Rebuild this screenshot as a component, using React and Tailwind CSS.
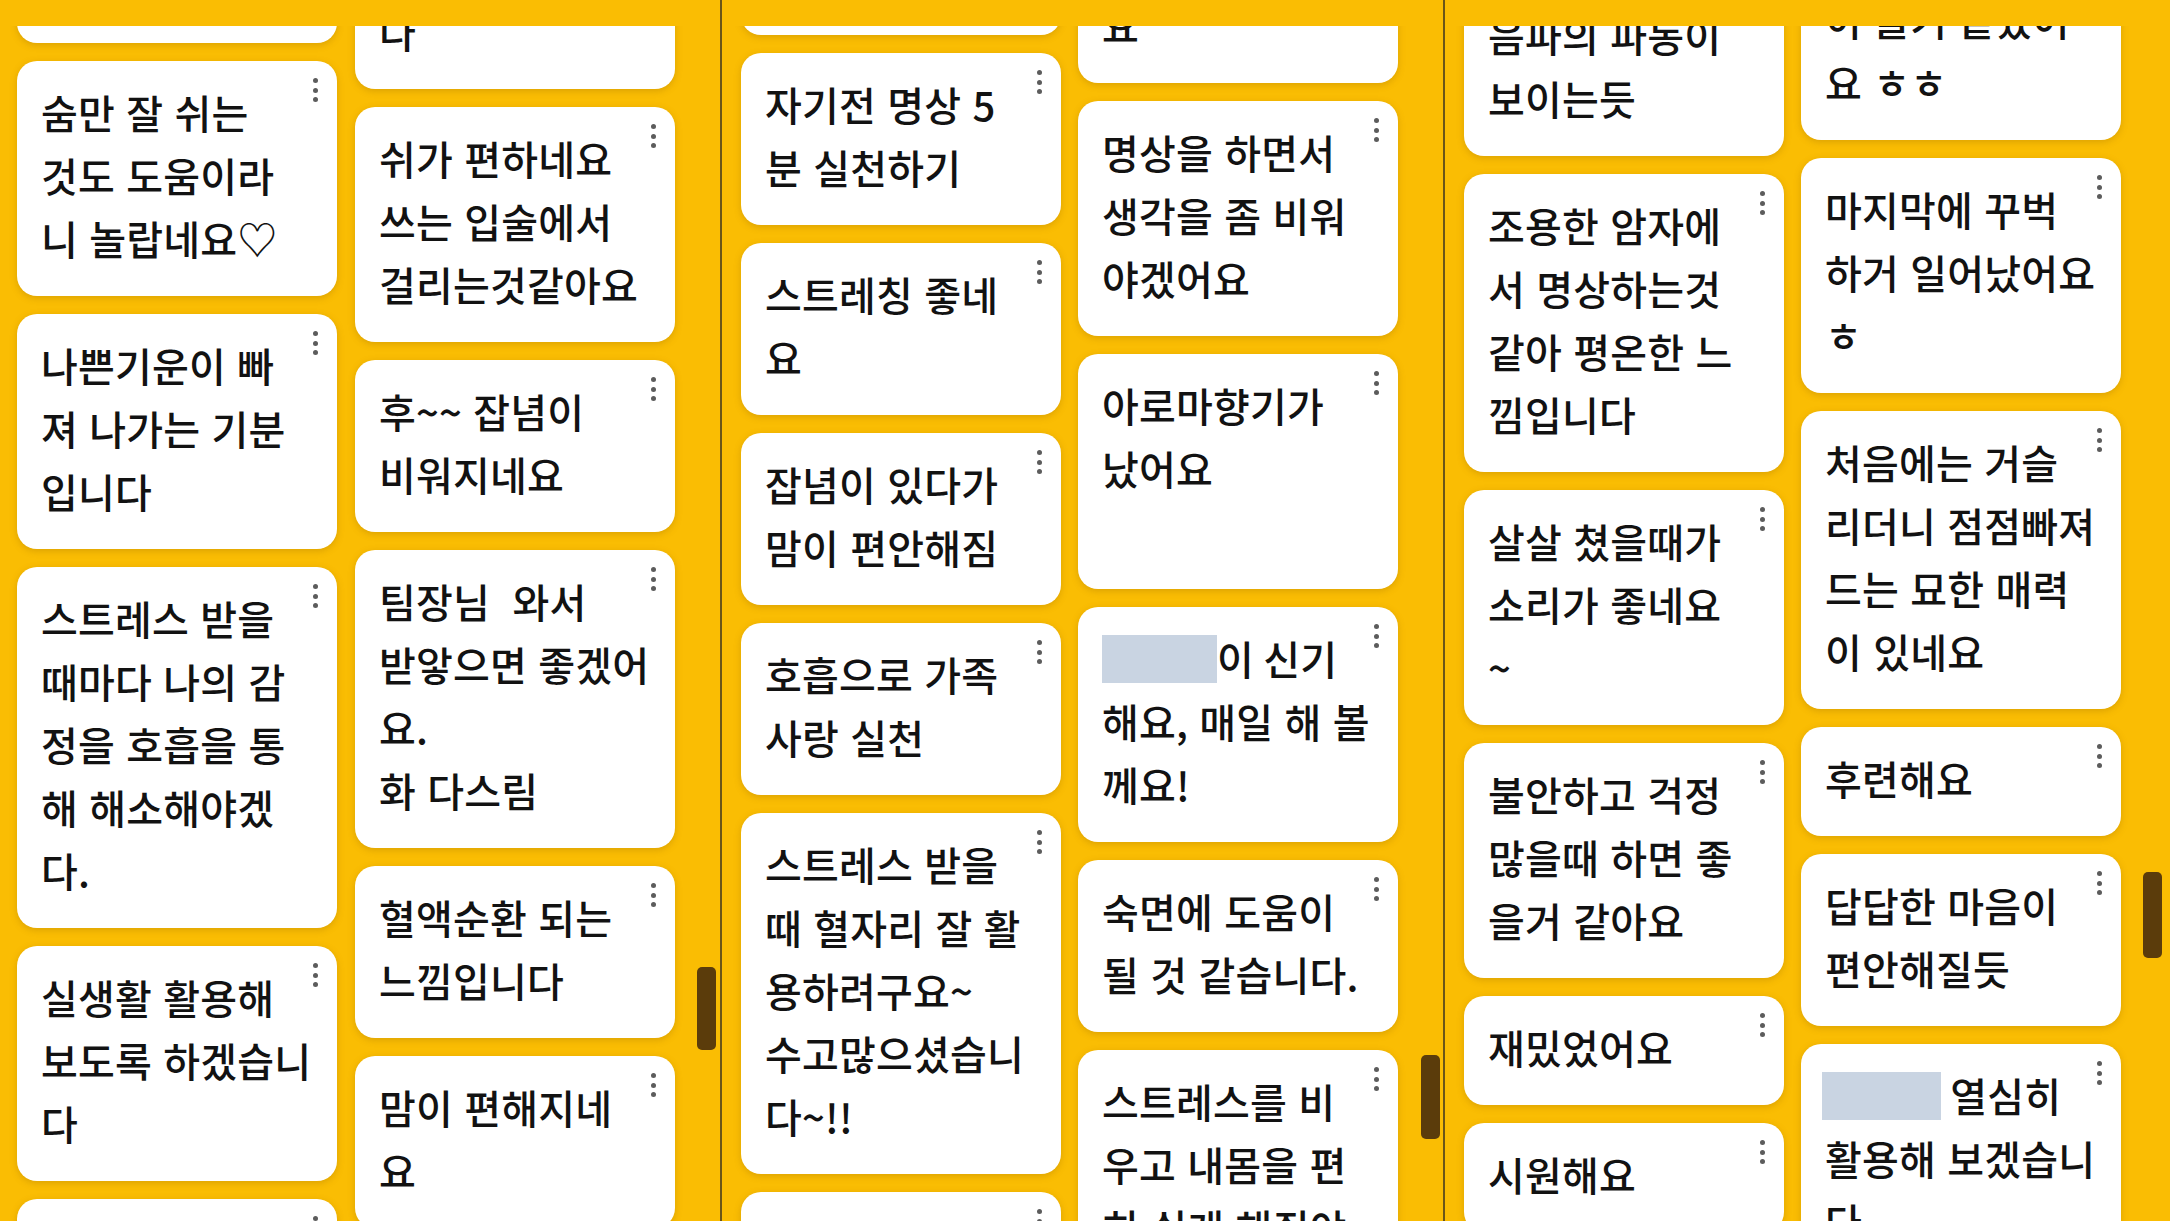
import React from "react";

const Blur = ({ w }) => (
  <span className={`inline-block h-[48px] bg-[#c9d4e2] ${w}`} />
);

const P1L = {
  offset: "-mt-[155px]",
  cards: [
    ["오늘도 감사", "좋은 시간"],
    ["숨만 잘 쉬는", "것도 도움이라", "니 놀랍네요♡"],
    ["나쁜기운이 빠", "져 나가는 기분", "입니다"],
    ["스트레스 받을", "때마다 나의 감", "정을 호흡을 통", "해 해소해야겠", "다."],
    ["실생활 활용해", "보도록 하겠습니", "다"],
    ["마음이 차분해", "집니다"],
  ],
};
const P1R = {
  offset: "-mt-[109px]",
  cards: [
    ["편안한 느낌입니", "다"],
    ["쉬가 편하네요", "쓰는 입술에서", "걸리는것같아요"],
    ["후~~ 잡념이", "비워지네요"],
    ["팀장님  와서", "받앟으면 좋겠어", "요.", "화 다스림"],
    ["혈액순환 되는", "느낌입니다"],
    ["맘이 편해지네", "요"],
  ],
};
const P2L = {
  offset: "-mt-[163px]",
  cards: [
    ["좋은 시간이었", "습니다"],
    ["자기전 명상 5", "분 실천하기"],
    ["스트레칭 좋네", "요"],
    ["잡념이 있다가", "맘이 편안해짐"],
    ["호흡으로 가족", "사랑 실천"],
    ["스트레스 받을", "때 혈자리 잘 활", "용하려구요~", "수고많으셨습니", "다~!!"],
    ["감사합니다", "좋았어요"],
  ],
};
const P2R = {
  offset: "-mt-[115px]",
  cards: [
    ["마음이 편해지네", "요"],
    ["명상을 하면서", "생각을 좀 비워", "야겠어요"],
    ["아로마향기가", "났어요", ""],
    [
      { blur: "w-[115px]", text: "이 신기" },
      "해요, 매일 해 볼",
      "께요!",
    ],
    ["숙면에 도움이", "될 것 같습니다."],
    ["스트레스를 비", "우고 내몸을 편", "히 쉬게 해줘야"],
  ],
};
const P3L = {
  offset: "-mt-[42px]",
  cards: [
    ["음파의 파동이", "보이는듯"],
    ["조용한 암자에", "서 명상하는것", "같아 평온한 느", "낌입니다"],
    ["살살 쳤을때가", "소리가 좋네요", "~"],
    ["불안하고 걱정", "많을때 하면 좋", "을거 같아요"],
    ["재밌었어요"],
    ["시원해요"],
  ],
};
const P3R = {
  offset: "-mt-[121px]",
  cards: [
    ["명상하다가 잠", "이 들기 끝났어", "요 ㅎㅎ"],
    ["마지막에 꾸벅", "하거 일어났어요", "ㅎ"],
    ["처음에는 거슬", "리더니 점점빠져", "드는 묘한 매력", "이 있네요"],
    ["후련해요"],
    ["답답한 마음이", "편안해질듯"],
    [
      { blur: "w-[119px]", text: " 열심히", shift: "-ml-[3px]" },
      "활용해 보겠습니",
      "다",
    ],
  ],
};

function Dots() {
  return (
    <div className="absolute top-[17px] right-[19px] flex flex-col gap-[4.5px]">
      <span className="block w-[5px] h-[5px] rounded-full bg-[#5c5c5c]" />
      <span className="block w-[5px] h-[5px] rounded-full bg-[#5c5c5c]" />
      <span className="block w-[5px] h-[5px] rounded-full bg-[#5c5c5c]" />
    </div>
  );
}

function Card({ lines }) {
  return (
    <div className="relative shrink-0 w-[320px] rounded-[20px] bg-white pl-[24px] pr-[30px] pt-[20px] pb-[26px] shadow-[0_2px_7px_rgba(140,90,0,0.28)]">
      {lines.map((l, i) =>
        typeof l === "string" ? (
          <div
            key={i}
            className="h-[63px] leading-[63px] whitespace-pre text-[40px] font-medium tracking-[0.2px] [word-spacing:2px] text-[#121212]"
          >
            {l}
          </div>
        ) : (
          <div
            key={i}
            className={`h-[63px] flex items-center whitespace-pre text-[40px] font-medium leading-[63px] tracking-[0.2px] text-[#121212] ${l.shift || ""}`}
          >
            <Blur w={l.blur} />
            <span>{l.text}</span>
          </div>
        )
      )}
      <Dots />
    </div>
  );
}

function Column({ data, extra }) {
  return (
    <div className={`flex flex-col gap-[18px] w-[320px] shrink-0 ${data.offset} ${extra || ""}`}>
      {data.cards.map((c, i) => (
        <Card key={i} lines={c} />
      ))}
    </div>
  );
}

function Panel({ width, pad, left, right, gap, barMl, thumbMt, thumbH }) {
  return (
    <div className={`flex flex-col h-full shrink-0 ${width}`}>
      <div className="h-[26px] shrink-0" />
      <div className={`flex-1 overflow-hidden flex flex-row items-start ${pad}`}>
        <Column data={left} />
        <Column data={right} extra={gap} />
        <div className={`w-[19px] shrink-0 flex flex-col ${barMl}`}>
          <div className={`w-[19px] rounded-[5px] bg-[#5b3c0b] ${thumbMt} ${thumbH}`} />
        </div>
      </div>
    </div>
  );
}

export default function App() {
  return (
    <div
      className="w-[2170px] h-[1221px] overflow-hidden flex flex-row bg-[#fabd03]"
      style={{ fontFamily: '"Noto Sans CJK KR", "Noto Sans", sans-serif' }}
    >
      <Panel
        width="w-[720px]"
        pad="pl-[17px]"
        left={P1L}
        right={P1R}
        gap="ml-[18px]"
        barMl="ml-[22px]"
        thumbMt="mt-[941px]"
        thumbH="h-[83px]"
      />
      <div className="w-[2px] h-full shrink-0 bg-[#6a5518]" />
      <Panel
        width="w-[721px]"
        pad="pl-[19px]"
        left={P2L}
        right={P2R}
        gap="ml-[17px]"
        barMl="ml-[23px]"
        thumbMt="mt-[1029px]"
        thumbH="h-[84px]"
      />
      <div className="w-[2px] h-full shrink-0 bg-[#6a5518]" />
      <Panel
        width="w-[725px]"
        pad="pl-[19px]"
        left={P3L}
        right={P3R}
        gap="ml-[17px]"
        barMl="ml-[22px]"
        thumbMt="mt-[846px]"
        thumbH="h-[86px]"
      />
    </div>
  );
}
